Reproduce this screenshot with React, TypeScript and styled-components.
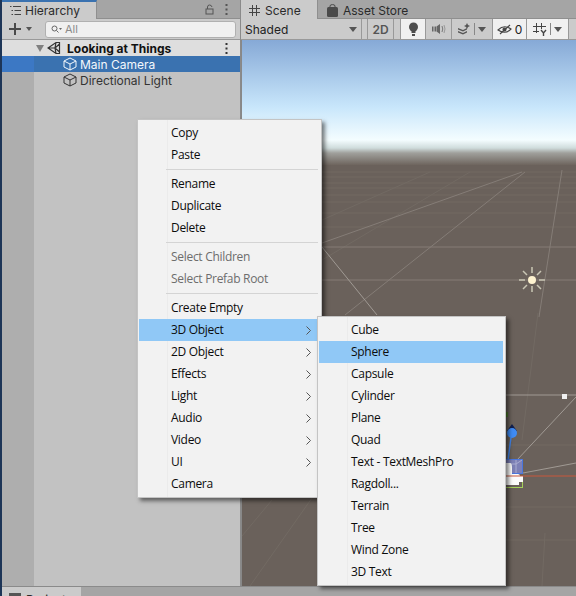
import styled, { createGlobalStyle } from 'styled-components'

const GlobalStyle = createGlobalStyle`
  html, body {
    margin: 0;
    padding: 0;
    background: #a5a5a5;
  }
  body {
    font-family: Inter, "Liberation Sans", sans-serif;
    overflow: hidden;
  }
`

const mainItems = [
  [{ label: 'Copy' }, { label: 'Paste' }],
  [{ label: 'Rename' }, { label: 'Duplicate' }, { label: 'Delete' }],
  [{ label: 'Select Children', disabled: true }, { label: 'Select Prefab Root', disabled: true }],
  [
    { label: 'Create Empty' },
    { label: '3D Object', sub: true, active: true },
    { label: '2D Object', sub: true },
    { label: 'Effects', sub: true },
    { label: 'Light', sub: true },
    { label: 'Audio', sub: true },
    { label: 'Video', sub: true },
    { label: 'UI', sub: true },
    { label: 'Camera' },
  ],
]

const objectItems = [
  'Cube',
  'Sphere',
  'Capsule',
  'Cylinder',
  'Plane',
  'Quad',
  'Text - TextMeshPro',
  'Ragdoll...',
  'Terrain',
  'Tree',
  'Wind Zone',
  '3D Text',
]

const CubeIcon = () => (
  <svg width="14" height="14" viewBox="0 0 14 14" fill="none" stroke="currentColor" strokeWidth="1">
    <path d="M7 1 L13 4 V10 L7 13 L1 10 V4 Z M1 4 L7 7 L13 4 M7 7 V13" />
  </svg>
)

const ListIcon = () => (
  <svg width="11" height="9" viewBox="0 0 11 9" fill="none" stroke="#444" strokeWidth="1">
    <path d="M0 0.5 H1.5 M3 0.5 H11 M1.5 4.5 H3 M4.5 4.5 H11 M1.5 8.5 H3 M4.5 8.5 H11" />
  </svg>
)

const GridIcon = () => (
  <svg width="11" height="11" viewBox="0 0 11 11" fill="none" stroke="#444" strokeWidth="1">
    <path d="M3.5 0 V11 M7.5 0 V11 M0 3.5 H11 M0 7.5 H11" />
  </svg>
)

const BagIcon = () => (
  <svg width="11" height="13" viewBox="0 0 11 13">
    <path d="M3 4 V2 Q3 .6 5.5 .6 Q8 .6 8 2 V4" fill="none" stroke="#4a4a4a" />
    <rect x="0" y="3" width="11" height="10" rx="1.5" fill="#4a4a4a" />
  </svg>
)

const LockIcon = () => (
  <svg width="9" height="11" viewBox="0 0 9 11" fill="none" stroke="#555">
    <rect x="1" y="5" width="7" height="5" />
    <path d="M2.5 5 V3 Q2.5 1 4.5 1 Q6.5 1 7 3" />
  </svg>
)

const DotsIcon = ({ color = '#555' }: { color?: string }) => (
  <svg width="3" height="11" viewBox="0 0 3 11" fill={color}>
    <rect x="0.5" y="0" width="2" height="2" />
    <rect x="0.5" y="4.5" width="2" height="2" />
    <rect x="0.5" y="9" width="2" height="2" />
  </svg>
)

const PlusIcon = () => (
  <svg width="12" height="12" viewBox="0 0 12 12" fill="#4a4a4a">
    <rect x="5" y="0" width="2" height="12" />
    <rect x="0" y="5" width="12" height="2" />
  </svg>
)

const SearchIcon = () => (
  <svg width="11" height="8" viewBox="0 0 11 8" fill="none" stroke="#666">
    <circle cx="3.5" cy="3.5" r="2.5" />
    <path d="M5.5 5.5 L7.5 7.5" />
    <path d="M8 3 H11 L9.5 5 Z" fill="#666" stroke="none" />
  </svg>
)

const UnityIcon = () => (
  <svg width="14" height="14" viewBox="0 0 14 14" fill="none" stroke="#333" strokeWidth="1.2">
    <path d="M1 7 L9 1.5 L12.5 1.5 L12.5 12.5 L9 12.5 Z M1 7 H8 M9 1.5 L8 7 L9 12.5 M12.5 3 L8 7 L12.5 11" />
  </svg>
)

const BulbIcon = () => (
  <svg width="11" height="14" viewBox="0 0 11 14" fill="#4d4d4d">
    <circle cx="5.5" cy="5" r="4.5" />
    <rect x="3.5" y="8" width="4" height="3" />
    <rect x="4" y="12" width="3" height="2" />
  </svg>
)

const AudioIcon = () => (
  <svg width="14" height="10" viewBox="0 0 14 10" fill="#666">
    <rect x="0" y="2.5" width="1.5" height="5" />
    <rect x="2.5" y="2.5" width="1.5" height="5" />
    <path d="M4.5 2.5 L8 0 V10 L4.5 7.5 Z" />
    <path d="M10 2 Q11.5 5 10 8" fill="none" stroke="#777" />
    <path d="M12 1 Q14 5 12 9" fill="none" stroke="#999" />
  </svg>
)

const EffectsIcon = () => (
  <svg width="13" height="12" viewBox="0 0 13 12" fill="#555">
    <path d="M0 5 L5 7 L9 5 V6.5 L5 8.5 L0 6.5 Z M0 8 L5 10 L9 8 V9.5 L5 11.5 L0 9.5 Z" />
    <path d="M9 0 L10 2 L12 3 L10 4 L9 6 L8 4 L6 3 L8 2 Z" />
  </svg>
)

const HiddenIcon = () => (
  <svg width="15" height="11" viewBox="0 0 15 11" fill="none" stroke="#444" strokeWidth="1.1">
    <path d="M1 6 Q7 0 14 5 Q8 11 1 6 Z" />
    <circle cx="7.5" cy="5.5" r="1.5" fill="#444" />
    <path d="M3 10 L13 1" />
  </svg>
)

const GizmoIcon = () => (
  <svg width="14" height="13" viewBox="0 0 14 13" fill="none" stroke="#444">
    <path d="M3.5 0 V10 M8.5 0 V6 M0 3.5 H13 M0 8.5 H6" />
    <path d="M8 7 L10.5 10 L13 7 M10.5 10 V13" strokeWidth="1.4" />
  </svg>
)

const ChevronIcon = () => (
  <svg width="5" height="9" viewBox="0 0 5 9" fill="none" stroke="#555">
    <path d="M0.5 0.5 L4.5 4.5 L0.5 8.5" />
  </svg>
)

const Caret = styled.span`
  width: 0;
  height: 0;
  border-left: 4px solid transparent;
  border-right: 4px solid transparent;
  border-top: 5px solid #555;
`

// viewBox is in page coordinates, so the scene's lines read the same as the reference
const SceneDrawing = () => (
  <svg width="334" height="546" viewBox="242 40 334 546">
    <defs>
      <linearGradient id="sky" x1="0" y1="0" x2="0" y2="1">
        <stop offset="0" stopColor="#86a9d6" />
        <stop offset="0.536" stopColor="#c8e6fb" />
        <stop offset="0.8" stopColor="#f4fdff" />
        <stop offset="0.864" stopColor="#cfdcdc" />
        <stop offset="0.904" stopColor="#a0a09c" />
        <stop offset="1" stopColor="#6e655e" />
      </linearGradient>
    </defs>
    <rect x="242" y="40" width="334" height="125" fill="url(#sky)" />
    <rect x="242" y="165" width="334" height="421" fill="#6a615b" />
    <g stroke="#726a63" fill="none">
      <path d="M242 172 H576 M242 177 H576 M242 183 H576 M242 188 H576 M242 195 H576 M242 202 H576 M242 213 H576 M242 227 H576" />
      <path d="M322 260 L470 172 M322 220 L430 172 M242 536 L272 500 M250 586 L312 498" />
      <path d="M505 507 H576 M505 540 H576 M505 445 H576" />
      <path d="M545 533 L542 586 M538 313 L522 440" />
    </g>
    <g stroke="#857d77" fill="none">
      <path d="M242 247 H576 M242 280 H576" />
      <path d="M322 243 L522 172" />
      <path d="M345 315 L525 172" />
      <path d="M539 317 L562 170" />
    </g>
    <g stroke="#a09a94" fill="none">
      <path d="M322 247 L377 315" />
      <path d="M505 395 H576" />
      <path d="M517 460 L576 397" />
      <path d="M523 473 L576 463" />
    </g>
    <rect x="562" y="394" width="5" height="5" fill="#f0f0f0" />
    <path d="M511 437 L508 460" stroke="#3f86f0" strokeWidth="1.5" />
    <path d="M512 424 L517 431 H507 Z" fill="#12204f" />
    <circle cx="512" cy="433" r="5" fill="#3f8cf5" />
    <rect x="506" y="412" width="2" height="5" fill="#4f7c2c" />
    <rect x="505.5" y="459.5" width="17" height="14" fill="#7d80b6" stroke="#4a76dd" />
    <path d="M516 460 V473 M506 464 H516 L522 460" stroke="#a9abd0" fill="none" />
    <rect x="505.5" y="476.5" width="17" height="11" fill="#6a615b" stroke="#a4d05a" />
    <path d="M506 463 H510 Q512 463 512 468 V474 H518 Q520 474 520 476 H523 V482 H519 V485 H506 Z" fill="#fcfcfc" />
    <path d="M506 476 H576" stroke="#c8583c" />
    <g stroke="#c9c6b4" strokeWidth="1.5">
      <path d="M532 267 V273 M532 286 V292 M519 280 H525 M539 280 H545 M523 271 L527 275 M537 285 L541 289 M541 271 L537 275 M527 285 L523 289" />
    </g>
    <circle cx="532" cy="280" r="4" fill="#fdf2cf" />
  </svg>
)

const App = () => {
  return (
    <Root>
      <GlobalStyle />
      <Main>
        <HierarchyPanel>
          <TabBar>
            <Tab $width={95} $focused>
              <ListIcon />
              <TabLabel>Hierarchy</TabLabel>
            </Tab>
            <TabActions>
              <LockIcon />
              <DotsIcon />
            </TabActions>
          </TabBar>
          <Toolbar>
            <AddButton>
              <PlusIcon />
              <Caret />
            </AddButton>
            <SearchField>
              <SearchIcon />
              <SearchText>All</SearchText>
            </SearchField>
          </Toolbar>
          <Tree>
            <SceneRow>
              <Triangle />
              <UnityIcon />
              <SceneName>Looking at Things</SceneName>
              <DotsIcon color="#333" />
            </SceneRow>
            <TreeRow $selected>
              <CubeIcon />
              <RowLabel>Main Camera</RowLabel>
            </TreeRow>
            <TreeRow>
              <CubeIcon />
              <RowLabel>Directional Light</RowLabel>
            </TreeRow>
          </Tree>
        </HierarchyPanel>
        <ScenePanel>
          <TabBar>
            <Tab $width={77}>
              <GridIcon />
              <TabLabel>Scene</TabLabel>
            </Tab>
            <PlainTab>
              <BagIcon />
              <TabLabel>Asset Store</TabLabel>
            </PlainTab>
          </TabBar>
          <SceneToolbar>
            <ShadedSelect>
              Shaded
              <Caret />
            </ShadedSelect>
            <ToolButton $width={27}>2D</ToolButton>
            <ToolButton $width={26} $on $gap>
              <BulbIcon />
            </ToolButton>
            <ToolButton $width={27}>
              <AudioIcon />
            </ToolButton>
            <ToolButton $width={42}>
              <EffectsIcon />
              <Pipe />
              <Caret />
            </ToolButton>
            <ToolButton $width={35} $on>
              <HiddenIcon />0
            </ToolButton>
            <ToolButton $width={43} $on>
              <GizmoIcon />
              <Pipe />
              <Caret />
            </ToolButton>
          </SceneToolbar>
          <Viewport>
            <SceneDrawing />
          </Viewport>
        </ScenePanel>
      </Main>
      <BottomBar>
        <BottomTab>
          <FolderIcon />
          Project
        </BottomTab>
      </BottomBar>

      <MainMenu>
        {mainItems.map((group, i) => (
          <MenuGroup key={i}>
            {group.map((item) => (
              <MenuItem key={item.label} $active={item.active} $disabled={item.disabled}>
                <MenuLabel>{item.label}</MenuLabel>
                {item.sub && <ChevronIcon />}
              </MenuItem>
            ))}
          </MenuGroup>
        ))}
      </MainMenu>
      <SubMenu>
        {objectItems.map((label) => (
          <MenuItem key={label} $active={label === 'Sphere'}>
            <MenuLabel>{label}</MenuLabel>
          </MenuItem>
        ))}
      </SubMenu>
    </Root>
  )
}

export default App

const Root = styled.div`
  position: relative;
  width: 576px;
  height: 596px;
  overflow: hidden;
  display: flex;
  flex-direction: column;
  background: #a5a5a5;
  border-left: 2px solid #1d3557;
  box-sizing: border-box;
`

const Main = styled.div`
  display: flex;
  height: 586px;
  flex: none;
`

const HierarchyPanel = styled.section`
  width: 238px;
  flex: none;
  display: flex;
  flex-direction: column;
  background: #c2c2c2;
  border-right: 1px solid #8a8a8a;
`

const ScenePanel = styled.section`
  flex: 1;
  min-width: 0;
  display: flex;
  flex-direction: column;
`

const TabBar = styled.div`
  height: 19px;
  flex: none;
  display: flex;
  background: #a5a5a5;
  border-bottom: 1px solid #8f8f8f;
  box-sizing: border-box;
`

const Tab = styled.div<{ $width: number; $focused?: boolean }>`
  width: ${(p) => p.$width}px;
  height: 19px;
  box-sizing: border-box;
  display: flex;
  align-items: center;
  gap: ${(p) => (p.$focused ? 4 : 5)}px;
  padding: ${(p) => (p.$focused ? '0' : '2px')} 0 0 8px;
  background: #cbcbcb;
  border-right: 1px solid #8f8f8f;
  border-top: ${(p) => (p.$focused ? '2px solid #3a72b0' : 'none')};
`

const PlainTab = styled.div`
  display: flex;
  align-items: center;
  gap: 5px;
  padding: 2px 0 0 9px;
`

const TabLabel = styled.span`
  font-size: 12px;
  color: #2a2a2a;
`

const TabActions = styled.div`
  margin-left: auto;
  display: flex;
  align-items: center;
  gap: 11px;
  padding-right: 12px;
`

const Toolbar = styled.div`
  height: 21px;
  flex: none;
  box-sizing: border-box;
  display: flex;
  align-items: center;
  background: #cbcbcb;
  border-bottom: 1px solid #999;
  padding: 0 4px 0 7px;
`

const AddButton = styled.div`
  width: 36px;
  flex: none;
  display: flex;
  align-items: center;
  gap: 5px;
  ${Caret} {
    border-left-width: 3px;
    border-right-width: 3px;
    border-top-width: 4px;
  }
`

const SearchField = styled.div`
  flex: 1;
  height: 15px;
  display: flex;
  align-items: center;
  gap: 3px;
  padding-left: 5px;
  background: #f0f0f0;
  border: 1px solid #b0b0b0;
  border-radius: 3px;
`

const SearchText = styled.span`
  font-size: 11px;
  color: #8a8a8a;
`

const Tree = styled.div`
  flex: 1;
  background: linear-gradient(to right, #aeaeae 32px, #c2c2c2 32px);
`

const SceneRow = styled.div`
  height: 16px;
  display: flex;
  align-items: center;
  padding: 0 12px 0 34px;
  background: #dedede;
  color: #111;
`

const Triangle = styled.span`
  width: 0;
  height: 0;
  margin-right: 3px;
  border-left: 4.5px solid transparent;
  border-right: 4.5px solid transparent;
  border-top: 7px solid #808080;
`

const SceneName = styled.span`
  margin-left: 6px;
  margin-right: auto;
  font-size: 12px;
  font-weight: 700;
`

const TreeRow = styled.div<{ $selected?: boolean }>`
  height: 16px;
  display: flex;
  align-items: center;
  gap: 3px;
  padding-left: 61px;
  color: ${(p) => (p.$selected ? '#f4f8fc' : '#333')};
  background: ${(p) =>
    p.$selected ? 'linear-gradient(to right, #3c78c4 32px, #3a72b0 32px)' : 'transparent'};
`

const RowLabel = styled.span`
  font-size: 12px;
`

const SceneToolbar = styled.div`
  height: 21px;
  flex: none;
  box-sizing: border-box;
  display: flex;
  background: #cbcbcb;
  border-bottom: 1px solid #999;
`

const ShadedSelect = styled.div`
  width: 121px;
  flex: none;
  box-sizing: border-box;
  display: flex;
  align-items: center;
  justify-content: space-between;
  padding: 0 4px 0 4px;
  font-size: 12px;
  color: #222;
  border-right: 1px solid #999;
  margin-right: 6px;
`

const ToolButton = styled.div<{ $width: number; $on?: boolean; $gap?: boolean }>`
  width: ${(p) => p.$width}px;
  flex: none;
  box-sizing: border-box;
  display: flex;
  align-items: center;
  justify-content: center;
  gap: 3px;
  font-size: 12px;
  font-weight: ${(p) => (p.$on ? 400 : 600)};
  color: ${(p) => (p.$on ? '#222' : '#555')};
  background: ${(p) => (p.$on ? '#f0f0f0' : '#cbcbcb')};
  border-left: 1px solid #999;
  border-right: 1px solid #999;
  margin-left: ${(p) => (p.$gap ? '6px' : '-1px')};
`

const Pipe = styled.span`
  width: 1px;
  height: 12px;
  background: #888;
`

const Viewport = styled.div`
  flex: 1;
  overflow: hidden;
  display: flex;
  border-left: 1px solid #888;
`

const BottomBar = styled.div`
  flex: 1;
  background: #a5a5a5;
  border-top: 1px solid #8a8a8a;
  display: flex;
`

const BottomTab = styled.div`
  width: 79px;
  display: flex;
  gap: 5px;
  padding: 6px 0 0 7px;
  box-sizing: border-box;
  background: #cbcbcb;
  font-size: 12px;
  color: #2a2a2a;
  line-height: 14px;
`

const FolderIcon = styled.span`
  width: 12px;
  height: 9px;
  background: #555;
`

const Menu = styled.div`
  position: absolute;
  box-sizing: border-box;
  padding: 2px 2px 2px 1px;
  background: linear-gradient(to right, #f2f2f2 29px, #ebebeb 29px, #ebebeb 30px, #f2f2f2 30px);
  border: 1px solid #c4c4c4;
  box-shadow: 3px 3px 4px rgba(0, 0, 0, 0.5);
  font-family: "Open Sans", "Noto Sans", sans-serif;
  font-size: 12px;
  letter-spacing: -0.3px;
`

const MainMenu = styled(Menu)`
  left: 135px;
  top: 119px;
  width: 185px;
  z-index: 1;
`

const SubMenu = styled(Menu)`
  left: 315px;
  top: 316px;
  width: 189px;
  z-index: 2;
`

const MenuGroup = styled.div`
  & + & {
    margin-top: 3px;
    padding-top: 4px;
    position: relative;
  }
  & + &::before {
    content: '';
    position: absolute;
    left: 27px;
    right: 1px;
    top: 0;
    height: 1px;
    background: #d4d4d4;
  }
`

const MenuItem = styled.div<{ $active?: boolean; $disabled?: boolean }>`
  height: 22px;
  display: flex;
  align-items: center;
  justify-content: space-between;
  padding: 0 8px 0 32px;
  color: ${(p) => (p.$disabled ? '#6d6d6d' : '#0c0c0c')};
  background: ${(p) => (p.$active ? '#90c8f6' : 'transparent')};
`

const MenuLabel = styled.span`
  position: relative;
  top: -1px;
`
